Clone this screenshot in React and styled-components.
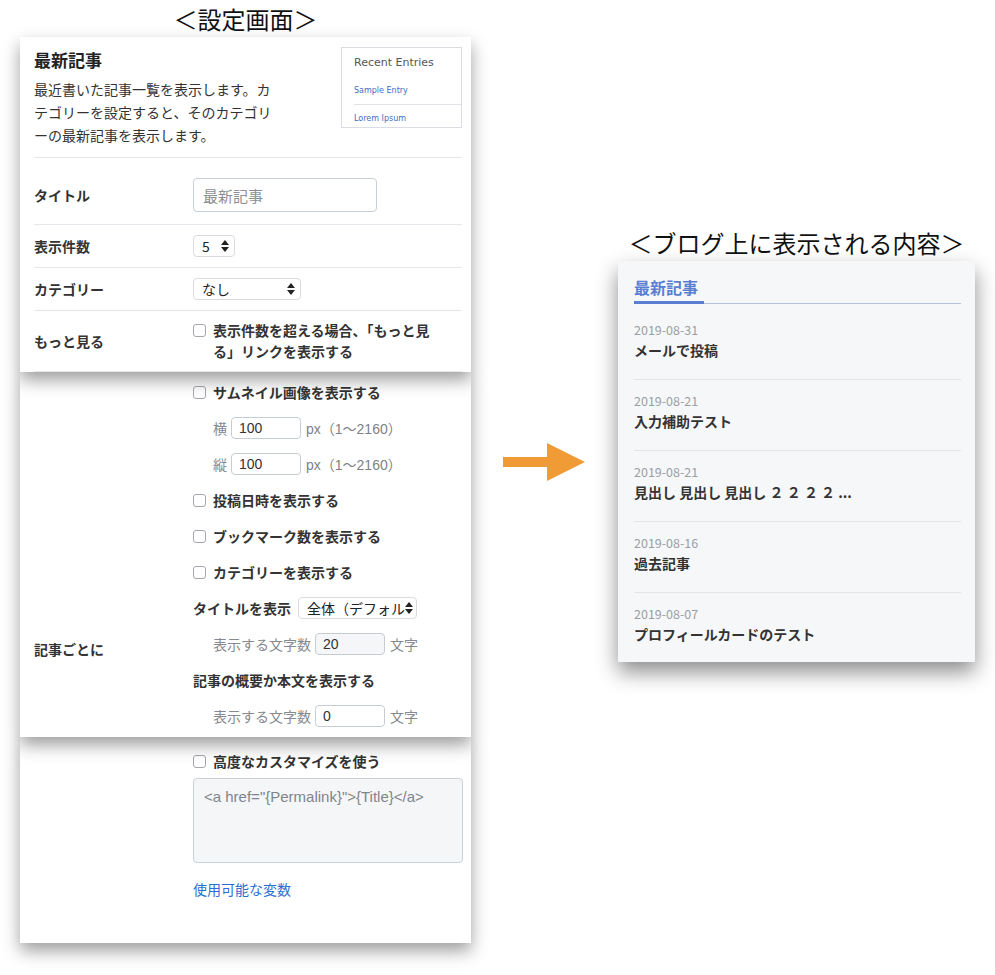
import React from 'react'
import styled, { createGlobalStyle } from 'styled-components'

const JP = `"Noto Sans CJK JP", "Noto Sans", sans-serif`
const LATIN = `"Liberation Sans", "Noto Sans CJK JP", sans-serif`

const GlobalStyle = createGlobalStyle`
  html, body {
    margin: 0;
    padding: 0;
    background: #fff;
  }
  body {
    font-family: ${JP};
    color: #333;
  }
  * {
    box-sizing: border-box;
  }
`

const Page = styled.div`
  display: flex;
  align-items: flex-start;
  width: 995px;
  height: 975px;
  padding-left: 20px;
  overflow: hidden;
`

const LeftCol = styled.div`
  width: 451px;
  display: flex;
  flex-flow: column nowrap;
`

const ArrowCol = styled.div`
  width: 147px;
  padding: 443px 0 0 32px;
`

const RightCol = styled.div`
  width: 357px;
  padding-top: 224px;
  display: flex;
  flex-flow: column nowrap;
`

const Caption = styled.div`
  height: 37px;
  line-height: 37px;
  font-size: 24px;
  text-align: center;
  color: #111;
  white-space: nowrap;
`

const Section = styled.div`
  position: relative;
  z-index: ${({ layer }) => layer};
  background: #fff;
  box-shadow: 0 8px 16px rgba(0, 0, 0, 0.38);
  padding: ${({ pad }) => pad};
`

const Header = styled.div`
  display: flex;
  justify-content: space-between;
  align-items: flex-start;
  padding: 10px 0 10px;
  border-bottom: 1px solid #e3e6ea;
`

const Title = styled.h1`
  margin: 0;
  font-size: 17px;
  line-height: 26px;
  font-weight: 700;
  color: #222;
`

const Description = styled.p`
  margin: 5px 0 0;
  font-size: 14px;
  line-height: 23px;
  color: #333;
`

const Preview = styled.div`
  width: 121px;
  height: 81px;
  border: 1px solid #dadde1;
  padding: 6px 0 0 12px;
  font-family: "DejaVu Sans", sans-serif;
`

const PreviewHead = styled.div`
  font-size: 11px;
  line-height: 18px;
  color: #555;
  margin-bottom: 12px;
`

const PreviewLink = styled.div`
  font-size: 8px;
  line-height: 13px;
  color: #3d6fc3;
  padding: 0 0 ${({ last }) => (last ? '0' : '7px')};
  margin-bottom: 7px;
  border-bottom: ${({ last }) => (last ? '0' : '1px solid #dfe2e6')};
`

const FormRow = styled.div`
  display: grid;
  grid-template-columns: 159px 1fr;
  align-items: center;
  padding: ${({ pad }) => pad};
  border-bottom: 1px solid #e3e6ea;
`

const Field = styled.div`
  display: flex;
  align-items: center;
`

const Grid = styled.div`
  display: grid;
  grid-template-columns: 159px 1fr;
`

const Label = styled.div`
  font-size: 14px;
  line-height: 21px;
  font-weight: 700;
  color: #333;
`

const BottomLabel = styled(Label)`
  align-self: end;
  padding-bottom: 74px;
`

const TextInput = styled.input`
  width: 184px;
  height: 34px;
  border: 1px solid #c9cfd6;
  border-radius: 4px;
  padding: 0 9px;
  font-family: ${JP};
  font-size: 15px;
  color: #333;
  outline: none;

  &::placeholder {
    color: #8c8f94;
  }
`

const SmallInput = styled.input`
  width: 70px;
  height: 22px;
  border: 1px solid #c5ccd3;
  border-radius: 4px;
  padding: 0 7px;
  margin: 0 5px 0 4px;
  font-family: ${LATIN};
  font-size: 14px;
  color: #333;
  background: ${({ filled }) => (filled ? '#f5f6f8' : '#fff')};
  outline: none;
`

const FakeSelect = styled.div`
  display: flex;
  align-items: center;
  justify-content: space-between;
  width: ${({ w }) => w}px;
  height: 22px;
  border: 1px solid #d8dce0;
  border-radius: 4px;
  padding: 0 5px 0 8px;
  margin-left: ${({ ml }) => ml || 0}px;
  background: #fff;
  font-size: 14px;
  font-weight: 400;
  line-height: 20px;
  color: #222;
  white-space: nowrap;

  svg {
    flex: none;
  }
`

const CheckRow = styled.div`
  display: flex;
  align-items: ${({ top }) => (top ? 'flex-start' : 'center')};
  font-size: 14px;
  line-height: 21px;
  font-weight: 700;
  color: #333;
`

const Box = styled.span`
  flex: none;
  width: 13px;
  height: 13px;
  border: 1px solid #a3a7ad;
  border-radius: 3px;
  background: #fff;
  margin: ${({ top }) => (top ? '4px' : '0')} 7px 0 0;
`

const Line = styled.div`
  height: 36px;
  display: flex;
  align-items: center;
  padding-left: ${({ indent }) => (indent ? '20px' : '0')};
  font-size: 14px;
  font-weight: ${({ bold }) => (bold ? 700 : 400)};
  color: ${({ muted }) => (muted ? '#858a90' : '#333')};
  white-space: nowrap;
`

const Unit = styled.span`
  font-family: ${LATIN};
  color: #7d8288;
`

const Stack = styled.div`
  display: flex;
  flex-flow: column nowrap;
`

const CodeArea = styled.textarea`
  display: block;
  width: 270px;
  height: 85px;
  margin-top: 6px;
  padding: 8px 10px;
  border: 1px solid #c9d1d9;
  border-radius: 4px;
  background: #f5f6f8;
  font-family: ${LATIN};
  font-size: 15px;
  line-height: 20px;
  color: #80858b;
  resize: none;
  outline: none;
`

const VarLink = styled.a`
  display: block;
  margin-top: 16px;
  font-size: 14px;
  line-height: 20px;
  color: #2d6dd2;
  text-decoration: none;
`

const BlogCard = styled.div`
  background: #f6f7f9;
  padding: 16px 14px 17px 16px;
  box-shadow: 0 10px 20px rgba(0, 0, 0, 0.45);
`

const BlogHead = styled.div`
  border-bottom: 1px solid #b5c2d7;
  margin-bottom: 5px;
`

const HeadTab = styled.div`
  width: 70px;
  font-size: 16px;
  line-height: 20px;
  font-weight: 700;
  color: #5a7fd2;
  padding-bottom: 4px;
  border-bottom: 3px solid #5a7fd2;
  margin-bottom: -1px;
`

const Entry = styled.div`
  padding: 12px 0 18px;
  border-bottom: 1px solid #e1e4e8;

  &:last-child {
    border-bottom: 0;
    padding-bottom: 0;
  }
`

const EntryDate = styled.div`
  font-size: 12.5px;
  line-height: 18px;
  color: #9a9fa5;
`

const EntryTitle = styled.div`
  font-size: 14px;
  line-height: 22px;
  font-weight: 700;
  color: #333;
`

const SelectArrows = () => (
  <svg width='8' height='12' viewBox='0 0 8 12'>
    <polygon points='4,0 8,5 0,5' fill='#222' />
    <polygon points='0,7 8,7 4,12' fill='#222' />
  </svg>
)

const Check = ({ children, top }) => (
  <CheckRow top={top}>
    <Box top={top} />
    <span>{children}</span>
  </CheckRow>
)

const entries = [
  { date: '2019-08-31', title: 'メールで投稿' },
  { date: '2019-08-21', title: '入力補助テスト' },
  { date: '2019-08-21', title: '見出し 見出し 見出し ２ ２ ２ ２ ...' },
  { date: '2019-08-16', title: '過去記事' },
  { date: '2019-08-07', title: 'プロフィールカードのテスト' }
]

const App = () => {
  return (
    <Page>
      <GlobalStyle />
      <LeftCol>
        <Caption>＜設定画面＞</Caption>

        <Section layer={3} pad='0 9px 0 14px'>
          <Header>
            <div>
              <Title>最新記事</Title>
              <Description>
                最近書いた記事一覧を表示します。カ
                <br />
                テゴリーを設定すると、そのカテゴリ
                <br />
                ーの最新記事を表示します。
              </Description>
            </div>
            <Preview>
              <PreviewHead>Recent Entries</PreviewHead>
              <PreviewLink>Sample Entry</PreviewLink>
              <PreviewLink last>Lorem Ipsum</PreviewLink>
            </Preview>
          </Header>
          <FormRow pad='20px 0 12px'>
            <Label>タイトル</Label>
            <Field>
              <TextInput placeholder='最新記事' readOnly />
            </Field>
          </FormRow>
          <FormRow pad='10px 0 10px'>
            <Label>表示件数</Label>
            <Field>
              <FakeSelect w={42}>
                <span>5</span>
                <SelectArrows />
              </FakeSelect>
            </Field>
          </FormRow>
          <FormRow pad='10px 0 10px'>
            <Label>カテゴリー</Label>
            <Field>
              <FakeSelect w={108}>
                <span>なし</span>
                <SelectArrows />
              </FakeSelect>
            </Field>
          </FormRow>
          <FormRow pad='9px 0 9px'>
            <Label>もっと見る</Label>
            <Check top>
              表示件数を超える場合、「もっと見
              <br />
              る」リンクを表示する
            </Check>
          </FormRow>
        </Section>

        <Section layer={2} pad='2px 9px 3px 14px'>
          <Grid>
            <BottomLabel>記事ごとに</BottomLabel>
            <Stack>
              <Line>
                <Check>サムネイル画像を表示する</Check>
              </Line>
              <Line indent muted>
                横<SmallInput defaultValue='100' readOnly />
                <Unit>px（1〜2160）</Unit>
              </Line>
              <Line indent muted>
                縦<SmallInput defaultValue='100' readOnly />
                <Unit>px（1〜2160）</Unit>
              </Line>
              <Line>
                <Check>投稿日時を表示する</Check>
              </Line>
              <Line>
                <Check>ブックマーク数を表示する</Check>
              </Line>
              <Line>
                <Check>カテゴリーを表示する</Check>
              </Line>
              <Line bold>
                タイトルを表示
                <FakeSelect w={119} ml={7}>
                  <span>全体（デフォル</span>
                  <SelectArrows />
                </FakeSelect>
              </Line>
              <Line indent muted>
                表示する文字数
                <SmallInput defaultValue='20' readOnly filled />
                文字
              </Line>
              <Line bold>記事の概要か本文を表示する</Line>
              <Line indent muted>
                表示する文字数
                <SmallInput defaultValue='0' readOnly />
                文字
              </Line>
            </Stack>
          </Grid>
        </Section>

        <Section layer={1} pad='14px 8px 44px 14px'>
          <Grid>
            <div />
            <Stack>
              <Check>高度なカスタマイズを使う</Check>
              <CodeArea
                readOnly
                defaultValue='<a href="{Permalink}">{Title}</a>'
              />
              <VarLink href='#'>使用可能な変数</VarLink>
            </Stack>
          </Grid>
        </Section>
      </LeftCol>

      <ArrowCol>
        <svg width='82' height='38' viewBox='0 0 82 38'>
          <polygon
            points='0,14 44,14 44,0 82,19 44,38 44,24 0,24'
            fill='#f09b35'
          />
        </svg>
      </ArrowCol>

      <RightCol>
        <Caption>＜ブログ上に表示される内容＞</Caption>
        <BlogCard>
          <BlogHead>
            <HeadTab>最新記事</HeadTab>
          </BlogHead>
          {entries.map(({ date, title }, i) => (
            <Entry key={i}>
              <EntryDate>{date}</EntryDate>
              <EntryTitle>{title}</EntryTitle>
            </Entry>
          ))}
        </BlogCard>
      </RightCol>
    </Page>
  )
}

export default App
